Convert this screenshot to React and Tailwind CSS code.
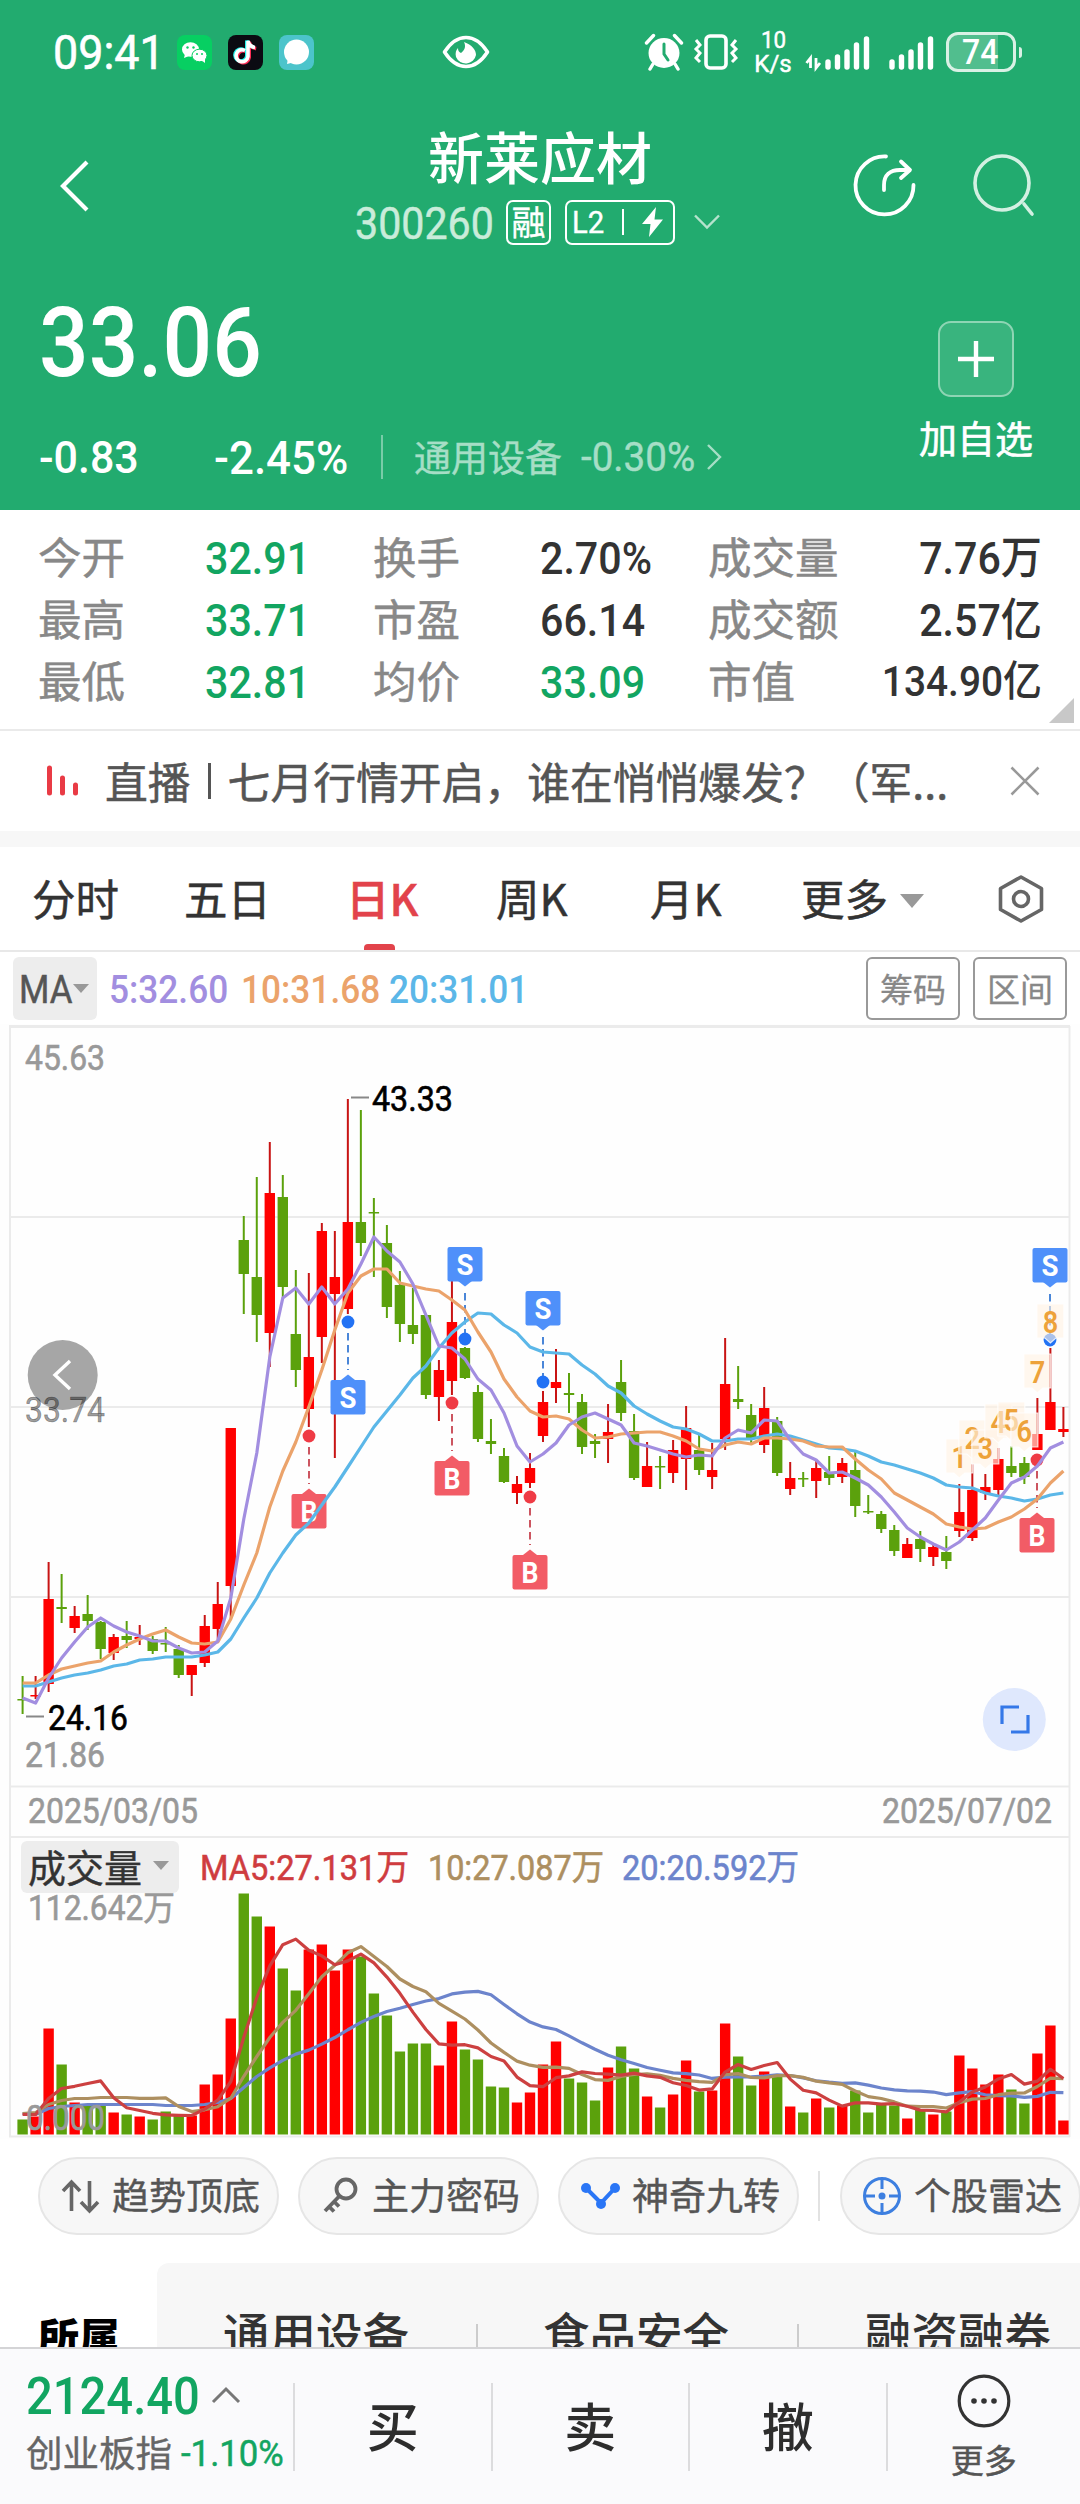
import clsx from 'clsx';

const NUM_FONT = "Roboto, 'Noto Sans CJK SC', sans-serif";
const STEP = 13.01;
const FIRST_X = 22.6;
const xAt = (i) => FIRST_X + STEP * i;

const UP = '#ff0000';
const DOWN = '#5ba10c';

// [direction, high, body top, body bottom, low, volume]
const CANDLES = [
  ['d', 652, 675, 676, 690, 15], ['u', 652, 671, 672, 675, 18], ['u', 538, 575, 660, 668, 106],
  ['d', 550, 583, 585, 599, 70], ['u', 582, 592, 604, 609, 32], ['d', 571, 590, 597, 606, 29],
  ['d', 597, 598, 625, 635, 31], ['u', 610, 613, 629, 636, 22], ['d', 597, 612, 616, 624, 20],
  ['u', 601, 613, 615, 621, 18], ['d', 612, 615, 627, 630, 15], ['d', 603, 619, 620, 628, 23],
  ['d', 621, 625, 651, 654, 20], ['u', 641, 641, 651, 672, 19], ['u', 591, 602, 639, 643, 50],
  ['u', 558, 580, 605, 616, 60], ['u', 404, 404, 562, 596, 116], ['d', 192, 216, 250, 290, 241],
  ['d', 153, 253, 291, 318, 218], ['u', 118, 169, 309, 343, 208], ['d', 151, 173, 263, 275, 166],
  ['d', 246, 310, 346, 363, 144], ['u', 249, 333, 385, 403, 185], ['u', 199, 207, 313, 339, 190],
  ['u', 207, 253, 270, 434, 164], ['u', 75, 198, 285, 290, 185], ['d', 86, 198, 219, 232, 178],
  ['d', 174, 188, 189, 253, 141], ['d', 201, 219, 283, 294, 119], ['d', 247, 261, 300, 318, 83],
  ['d', 264, 301, 310, 320, 91], ['d', 291, 291, 371, 375, 91], ['u', 336, 346, 373, 397, 69],
  ['u', 254, 298, 357, 371, 113], ['d', 323, 324, 354, 355, 85], ['d', 361, 368, 415, 418, 75],
  ['d', 395, 417, 420, 430, 48], ['d', 424, 432, 458, 459, 47], ['u', 452, 460, 469, 480, 32],
  ['u', 429, 444, 459, 464, 42], ['u', 367, 378, 412, 418, 70], ['u', 325, 358, 364, 379, 93],
  ['d', 349, 369, 371, 389, 56], ['d', 370, 378, 423, 430, 52], ['d', 410, 417, 420, 434, 34],
  ['u', 380, 408, 415, 439, 67], ['d', 336, 358, 389, 397, 88], ['d', 390, 407, 454, 456, 66],
  ['u', 418, 442, 463, 463, 38], ['d', 432, 442, 443, 465, 27], ['u', 416, 426, 449, 459, 40],
  ['u', 382, 404, 435, 466, 74], ['d', 411, 426, 446, 451, 43], ['u', 419, 446, 453, 465, 44],
  ['u', 314, 360, 415, 426, 111], ['d', 342, 375, 378, 385, 78], ['d', 380, 391, 415, 419, 49],
  ['u', 363, 384, 421, 429, 63], ['d', 393, 397, 449, 452, 59], ['u', 438, 454, 465, 471, 28],
  ['d', 448, 454, 455, 463, 22], ['u', 437, 444, 457, 474, 36], ['d', 432, 448, 454, 461, 27],
  ['u', 434, 439, 453, 459, 29], ['d', 428, 446, 482, 493, 44], ['d', 471, 487, 488, 490, 22],
  ['d', 487, 490, 505, 509, 30], ['d', 501, 506, 527, 532, 29], ['u', 514, 520, 534, 534, 16],
  ['d', 507, 515, 525, 538, 25], ['u', 521, 523, 533, 542, 20], ['d', 512, 528, 537, 545, 23],
  ['u', 460, 488, 507, 513, 79], ['u', 440, 466, 514, 517, 66], ['u', 450, 463, 469, 476, 50],
  ['u', 424, 435, 466, 471, 60], ['d', 422, 442, 449, 453, 45], ['d', 433, 439, 453, 460, 31],
  ['u', 374, 410, 426, 426, 81], ['u', 324, 378, 406, 406, 109], ['u', 383, 405, 408, 413, 14],
];

const MA5 = [
  674, 679, 654, 634, 618, 603, 594, 602, 608, 612, 617, 617, 624, 629, 628, 617, 574, 495, 429, 333,
  274, 264, 280, 263, 280, 265, 240, 213, 227, 238, 260, 291, 322, 324, 335, 355, 366, 389, 422, 438,
  430, 419, 401, 393, 389, 395, 401, 419, 422, 426, 430, 433, 431, 432, 414, 406, 409, 396, 397, 416,
  430, 436, 449, 448, 454, 461, 473, 488, 504, 513, 520, 526, 518, 506, 494, 476, 459, 453, 442, 424, 418,
];
const MA10 = [
  659, 659, 651, 645, 642, 639, 637, 628, 621, 615, 610, 606, 613, 619, 620, 618, 595, 561, 529, 483,
  447, 418, 383, 346, 306, 269, 252, 245, 245, 259, 262, 265, 267, 276, 286, 308, 328, 355, 373, 387,
  393, 392, 395, 406, 414, 413, 410, 409, 408, 408, 412, 417, 425, 427, 421, 418, 420, 414, 414, 415,
  417, 422, 423, 423, 435, 446, 455, 469, 476, 483, 490, 500, 503, 505, 504, 498, 493, 485, 475, 459, 447,
];
const MA20 = [
  662, 662, 658, 654, 651, 649, 646, 642, 640, 636, 635, 633, 633, 633, 631, 628, 615, 594, 574, 549,
  529, 511, 499, 481, 463, 443, 423, 403, 387, 371, 354, 342, 324, 309, 298, 289, 290, 301, 309, 323,
  328, 329, 330, 341, 350, 362, 369, 382, 390, 397, 403, 405, 410, 417, 417, 415, 415, 412, 410, 412,
  416, 420, 424, 425, 427, 432, 438, 441, 445, 449, 454, 461, 463, 464, 469, 472, 474, 477, 475, 471, 469,
];

const VOLUMES = CANDLES.map((c) => c[5]);

// the lead values cover the days whose window starts before the first bar
const movingAverage = (span, lead) =>
  VOLUMES.map((_, i) => {
    if (i < lead.length) return lead[i];
    const part = VOLUMES.slice(i - span + 1, i + 1);
    return part.reduce((a, b) => a + b, 0) / span;
  });

const VOL_MA5 = movingAverage(5, [20, 20, 36, 46]);
const VOL_MA10 = movingAverage(10, [21, 22, 30, 34, 36, 36, 37, 37, 37]);
const VOL_MA20 = movingAverage(20, [21, 20, 26, 28, 29, 30, 30, 30, 30, 30, 30, 29, 29, 29, 30, 32, 36, 47, 58]);

const toPoints = (ys) => ys.map((y, i) => `${xAt(i).toFixed(1)},${y}`).join(' ');

const MARKERS = [
  { type: 'S', x: 348, dot: 298, box: 356 },
  { type: 'S', x: 465, dot: 315, box: 223 },
  { type: 'S', x: 543, dot: 358, box: 267 },
  { type: 'S', x: 1050, dot: 316, box: 224 },
  { type: 'B', x: 309, dot: 412, box: 470 },
  { type: 'B', x: 452, dot: 379, box: 437 },
  { type: 'B', x: 530, dot: 473, box: 531 },
  { type: 'B', x: 1037, dot: 436, box: 494 },
];

const NINE_TURNS = [
  [1, 415], [2, 396], [3, 406], [4, 380], [5, 378], [6, 389], [7, 330], [8, 280],
];

const STATS = [
  ['今开', '32.91', true, '换手', '2.70%', false, '成交量', '7.76万'],
  ['最高', '33.71', true, '市盈', '66.14', false, '成交额', '2.57亿'],
  ['最低', '32.81', true, '均价', '33.09', true, '市值', '134.90亿'],
];

const Num = ({ className, right, wide, children }) => (
  <span
    className={clsx(
      "inline-block whitespace-nowrap pt-[0.07em] leading-none font-medium font-['Roboto','Noto_Sans_CJK_SC',sans-serif]",
      wide ? 'scale-x-[0.965]' : 'scale-x-[0.915]',
      right ? 'origin-right' : 'origin-left',
      className
    )}
  >
    {children}
  </span>
);

const Signal = ({ data }) => (
  <svg className={data ? 'w-[66px] h-[40px]' : 'w-[46px] h-[40px]'} viewBox={data ? '0 0 66 40' : '20 0 46 40'}>
    <g stroke="#fff" strokeWidth="5.4" strokeLinecap="round">
      <path d="M23 35v-5M32.500 35v-10M42 35v-15M51.500 35v-22M61.500 35V7" />
    </g>
    {data && <path d="M5.500 36V26l-4 5M11 26v10l4-5" fill="none" stroke="#fff" strokeWidth="2.800" />}
  </svg>
);

const StatusBar = () => (
  <div className="flex h-[104px] items-center pl-[53px] text-white">
    <Num className="w-[124px] !pt-0 text-[49px] !font-normal [-webkit-text-stroke:0.6px]">09:41</Num>
    <svg className="size-[35px]" viewBox="0 0 35 35">
      <rect width="35" height="35" rx="8" fill="#07cf62" />
      <ellipse cx="13.500" cy="14.500" rx="8.500" ry="7.300" fill="#fff" />
      <path d="M8 19l-1 4 5-2z" fill="#fff" />
      <ellipse cx="22.500" cy="20.500" rx="7.500" ry="6.300" fill="#fff" stroke="#07cf62" strokeWidth="1" />
      <path d="M24 25l4 3v-5z" fill="#fff" />
      <g fill="#07cf62">
        <circle cx="10.500" cy="12.500" r="1.200" /><circle cx="16.500" cy="12.500" r="1.200" />
        <circle cx="20" cy="19" r="1" /><circle cx="25" cy="19" r="1" />
      </g>
    </svg>
    <svg className="ml-4 size-[35px]" viewBox="0 0 35 35">
      <rect width="35" height="35" rx="8" fill="#0b0b12" />
      <g fill="none" strokeWidth="3.600">
        <path d="M17 15.500a6 6 0 1 0 3 6V6c1 4 3 6 7 6.500" stroke="#fe2c55" transform="translate(1.200 1)" />
        <path d="M17 15.500a6 6 0 1 0 3 6V6c1 4 3 6 7 6.500" stroke="#25f4ee" transform="translate(-1.200 -.6)" />
        <path d="M17 15.500a6 6 0 1 0 3 6V6c1 4 3 6 7 6.500" stroke="#fff" />
      </g>
    </svg>
    <svg className="ml-4 size-[35px]" viewBox="0 0 35 35">
      <rect width="35" height="35" rx="8" fill="#4cc4cb" />
      <circle cx="17.500" cy="17" r="12.500" fill="#fff" />
      <path d="M9 23l-1 6 8-2z" fill="#fff" />
    </svg>
    <svg className="ml-[128px] h-[34px] w-[48px]" viewBox="0 0 48 34">
      <path d="M2.500 17C9 7 16 2.500 24 2.500S39 7 45.500 17C39 27 32 31.500 24 31.500S9 27 2.500 17z" fill="none" stroke="#fff" strokeWidth="3.600" strokeLinejoin="round" />
      <path d="M22 7c8 3 12 8 12 13a10.500 10.500 0 0 1-20 2c-1-4 0-7 2-9 0 3 1 4 3 5 4-3 5-7 3-11z" fill="#fff" />
    </svg>
    <svg className="ml-[154px] h-[38px] w-[40px]" viewBox="0 0 40 38">
      <ellipse cx="20" cy="20" rx="15.500" ry="15" fill="#fff" />
      <path d="M2.500 10l7-7.500M37.500 10l-7-7.500M9 31l-3 5M31 31l3 5" stroke="#fff" strokeWidth="3.400" strokeLinecap="round" />
      <path d="M20 11v10l4 6" fill="none" stroke="#22ab6f" strokeWidth="3" strokeLinecap="round" />
    </svg>
    <svg className="ml-[9px] h-[36px] w-[46px]" viewBox="0 0 46 36">
      <rect x="13" y="2" width="20" height="32" rx="4" fill="none" stroke="#fff" strokeWidth="3.600" />
      <path d="M3 6l4 5-4 4 4 4-4 5 4 4M43 6l-4 5 4 4-4 4 4 5-4 4" fill="none" stroke="#fff" strokeWidth="3" />
    </svg>
    <div className="ml-[16px] flex w-[36px] flex-col items-center font-[Roboto] text-[24px] leading-[24px] [-webkit-text-stroke:0.5px]">
      <span className="scale-x-[0.93]">10</span>
      <span>K/s</span>
    </div>
    <div className="ml-[14px]"><Signal data /></div>
    <div className="ml-[18px]"><Signal /></div>
    <div className="ml-[11px] flex h-[40px] w-[70px] items-center rounded-[12px] border-[3.500px] border-[#d9f1e5] bg-[linear-gradient(90deg,#51be8e_77%,#22ab6f_77%)]">
      <Num className="ml-[13px] !pt-0 text-[35px]">74</Num>
    </div>
    <div className="ml-[3px] h-[11px] w-[3px] rounded-r bg-[#d9f1e5]" />
  </div>
);

const TitleBar = () => (
  <div className="flex h-[152px] items-start text-white">
    <svg className="ml-[58px] mt-[54px] h-[56px] w-[34px]" viewBox="0 0 34 56">
      <path d="M29 4L5 28l24 24" fill="none" stroke="#fff" strokeWidth="4.200" />
    </svg>
    <div className="ml-[263px] flex w-[371px] flex-col">
      <div className="ml-[73px] flex h-[60px] mt-[21px] items-center text-[56px] font-medium leading-none">新莱应材</div>
      <div className="flex h-[46px] mt-[14px] items-center">
        <Num className="w-[151px] !pt-[3px] text-[45px] !font-normal text-[#c9ecda] [-webkit-text-stroke:0.5px]">300260</Num>
        <div className="flex size-[45px] shrink-0 items-center justify-center rounded-[7px] border-[2.500px] border-white pb-[2px] text-[34px] leading-none [-webkit-text-stroke:0.4px]">融</div>
        <div className="ml-[14px] flex h-[45px] w-[110px] items-center rounded-[7px] border-[2.500px] border-white">
          <Num className="ml-[5px] w-[50px] !pt-0 text-[32px] !font-normal [-webkit-text-stroke:0.4px]">L2</Num>
          <div className="h-[26px] w-[2px] bg-white" />
          <svg className="ml-[18px] h-[30px] w-[22px]" viewBox="0 0 22 30">
            <path d="M14 0L0 17h8.500L7 30 21 12.500h-8.500z" fill="#fff" />
          </svg>
        </div>
        <svg className="ml-[18px] h-[18px] w-[28px]" viewBox="0 0 28 18">
          <path d="M2 2.500l12 12 12-12" fill="none" stroke="#b5e3cd" strokeWidth="2.400" />
        </svg>
      </div>
    </div>
    <svg className="ml-[125px] mt-[47px] size-[68px]" viewBox="0 0 68 68" fill="none" stroke="#fff" strokeWidth="3.800" strokeLinecap="round">
      <path d="M35 5.500A29 29 0 1 0 62.500 34" />
      <path d="M33 39V34C33 24 39 19 49 19h9M50 10.500l9 8.500-9 8" strokeLinejoin="round" />
    </svg>
    <svg className="ml-[52px] mt-[48px] size-[66px]" viewBox="0 0 66 66" fill="none" stroke="#d3f0e2" strokeWidth="3.600" strokeLinecap="round">
      <circle cx="31" cy="31" r="27" />
      <path d="M53 52l8 10" />
    </svg>
  </div>
);

const PriceBlock = () => (
  <div className="flex h-[254px] justify-between pl-[39px] pr-[47px] text-white">
    <div className="flex flex-col">
      <Num className="mt-[37px] !pt-0 text-[95.500px] !leading-[100px]">33.06</Num>
      <div className="mt-[39px] flex h-[50px] items-center">
        <Num wide className="w-[175px] text-[44.500px]">-0.83</Num>
        <Num wide className="w-[167px] text-[45.500px]">-2.45%</Num>
        <div className="h-[44px] w-[2px] bg-[#79cca8]" />
        <span className="ml-[31px] w-[167px] pb-[2px] text-[37px] leading-none text-[#a6dec6] [-webkit-text-stroke:0.4px]">通用设备</span>
        <Num wide className="w-[124px] text-[40px] !font-normal text-[#a6dec6] [-webkit-text-stroke:0.4px]">-0.30%</Num>
        <svg className="h-[30px] w-[18px]" viewBox="0 0 18 30">
          <path d="M3 3l12 12L3 27" fill="none" stroke="#a6dec6" strokeWidth="2.400" />
        </svg>
      </div>
    </div>
    <div className="flex w-[114px] flex-col items-center pt-[65px]">
      <div className="flex size-[76px] items-center justify-center rounded-[13px] border-2 border-[#8ed5b4] bg-[#39b47e]">
        <svg className="size-[40px]" viewBox="0 0 40 40">
          <path d="M20 2v36M2 20h36" stroke="#fff" strokeWidth="4.400" />
        </svg>
      </div>
      <div className="mt-[21px] whitespace-nowrap text-[38px] leading-none [-webkit-text-stroke:0.6px]">加自选</div>
    </div>
  </div>
);

const Stats = () => (
  <div className="flex h-[219px] justify-between">
    <div className="flex flex-col pl-[38px] pt-[16px] text-[43.500px] leading-none text-[#888]">
      {STATS.map(([a, av, aGreen, b, bv, bGreen, c, cv]) => (
        <div key={a} className="flex h-[62px] items-center">
          <span className="w-[167px] pb-[2px] [-webkit-text-stroke:0.5px]">{a}</span>
          <Num className={clsx('w-[168px] text-[45px]', aGreen ? 'text-[#12a561]' : 'text-[#333]')}>{av}</Num>
          <span className="w-[167px] pb-[2px] [-webkit-text-stroke:0.5px]">{b}</span>
          <Num className={clsx('w-[168px] text-[45px]', bGreen ? 'text-[#12a561]' : 'text-[#333]')}>{bv}</Num>
          <span className="w-[134px] pb-[2px] [-webkit-text-stroke:0.5px]">{c}</span>
          <Num right className={clsx('w-[200px] text-right text-[#333]', cv.length > 6 ? 'text-[42.500px]' : 'text-[45px]')}>{cv}</Num>
        </div>
      ))}
    </div>
    <svg className="mr-[6px] mt-[188px] size-[25px]" viewBox="0 0 25 25">
      <path d="M25 0v25H0z" fill="#c8c8c8" />
    </svg>
  </div>
);

const News = () => (
  <div className="flex h-[102px] items-center border-t-2 border-[#eaeaea] pl-[45px]">
    <svg className="h-[32px] w-[36px]" viewBox="0 0 36 32">
      <path d="M4.500 3v25M17.500 13v15M30.500 20v8" stroke="#e93b45" strokeWidth="5" strokeLinecap="round" />
    </svg>
    <div className="ml-[24px] w-[905px] whitespace-nowrap pb-[2px] text-[42.800px] leading-none text-[#555] [-webkit-text-stroke:0.5px]">
      直播<span className="mx-[17px] inline-block h-[36px] w-[3px] bg-[#555]" />七月行情开启，谁在悄悄爆发？（军...
    </div>
    <svg className="size-[30px]" viewBox="0 0 30 30">
      <path d="M1.500 1.500l27 27M28.500 1.500l-27 27" stroke="#999" strokeWidth="2.600" />
    </svg>
  </div>
);

const Tabs = () => (
  <div className="flex h-[105px] items-center border-b-2 border-[#e8e8e8] pl-[32px] text-[43.500px] leading-none text-[#333] [-webkit-text-stroke:0.5px]">
    <span className="w-[152px] pb-[2px]">分时</span>
    <span className="w-[162px] pb-[2px]">五日</span>
    <span className="relative flex h-full w-[150px] items-center pb-[2px] font-medium text-[#e2434b]">
      日K
      <span className="absolute bottom-0 left-[18px] h-[6px] w-[31px] rounded-t-[4px] bg-[#e2434b]" />
    </span>
    <span className="w-[154px] pb-[2px]">周K</span>
    <span className="w-[151px] pb-[2px]">月K</span>
    <span className="w-[99px] pb-[2px]">更多</span>
    <svg className="mt-1 h-[14px] w-[24px]" viewBox="0 0 24 14">
      <path d="M0 0h24L12 14z" fill="#999" />
    </svg>
    <svg className="ml-[72px] size-[50px]" viewBox="0 0 50 50" fill="none" stroke="#666" strokeWidth="3.600">
      <path d="M25 3l20.500 11.500v21L25 47 4.500 35.500v-21z" strokeLinejoin="round" />
      <circle cx="25" cy="25" r="7.500" />
    </svg>
  </div>
);

const MaBar = () => (
  <div className="flex h-[72px] items-center pl-[13px] pr-[13px] pt-px">
    <div className="flex h-[63px] w-[84px] items-center rounded-[6px] bg-[#ededed] pl-[6px]">
      <Num className="w-[54px] text-[38px] !font-normal text-[#555] [-webkit-text-stroke:0.5px]">MA</Num>
      <svg className="h-[9px] w-[16px]" viewBox="0 0 16 9">
        <path d="M0 0h16L8 9z" fill="#999" />
      </svg>
    </div>
    <Num className="ml-[12px] w-[132px] text-[38.500px] text-[#a28ee0]">5:32.60</Num>
    <Num className="w-[148px] text-[38.500px] text-[#eba36b]">10:31.68</Num>
    <Num className="w-[150px] text-[38.500px] text-[#5bb7e8]">20:31.01</Num>
    <div className="ml-auto flex gap-[13px] text-[33px] leading-none text-[#888] [-webkit-text-stroke:0.3px]">
      <div className="flex h-[63px] w-[94px] items-center justify-center rounded-[6px] border-2 border-[#999]">筹码</div>
      <div className="flex h-[63px] w-[94px] items-center justify-center rounded-[6px] border-2 border-[#999]">区间</div>
    </div>
  </div>
);

const Marker = ({ type, x, dot, box }) => {
  const above = box < dot;
  const fill = type === 'S' ? '#4f90fa' : '#f25c66';
  const line = type === 'S' ? '#4a86d8' : '#cc5560';
  const tip = above
    ? `M${x - 7} ${box + 34}l7 5.500 7-5.500z`
    : `M${x - 7} ${box}l7-5.500 7 5.500z`;

  return (
    <g>
      <path
        d={above ? `M${x} ${box + 46}V${dot - 6}` : `M${x} ${dot + 11}V${box - 10}`}
        stroke={line} strokeWidth="2" strokeDasharray="7.500 4.500"
      />
      <circle cx={x} cy={dot} r="6.400" fill={type === 'S' ? '#2272f4' : '#ef3b45'} />
      <path d={tip} fill={fill} />
      <rect x={x - 17.5} y={box} width="35" height="34.500" rx="2" fill={fill} />
      <text x={x} y={box + 28} textAnchor="middle" fontSize="30" fontWeight="700" fill="#fff"
        fontFamily={NUM_FONT} textLength="17" lengthAdjust="spacingAndGlyphs">{type}</text>
    </g>
  );
};

const ChartLabel = ({ x, y, width, size = 34.5, fill = '#999', children }) => (
  <text x={x} y={y} fontSize={size} fill={fill} fontFamily={NUM_FONT} stroke={fill} strokeWidth="0.6"
    textLength={width} lengthAdjust="spacingAndGlyphs">{children}</text>
);

const Line = ({ ys, color }) => (
  <polyline points={toPoints(ys)} fill="none" stroke={color} strokeWidth="3.200" strokeLinejoin="round" />
);

const CandleChart = () => (
  <svg className="block h-[812px] w-[1080px] bg-[#fefefe]" viewBox="0 0 1080 812">
    <g stroke="#ebebeb" strokeWidth="2">
      <path d="M9 2.500h1061" strokeWidth="3" />
      <path d="M9 193h1061M9 383h1061M9 573h1061M9 762.500h1061" />
      <path d="M10 2v810M1069.500 2v810" />
    </g>
    <ChartLabel x={25} y={46} width={80}>45.63</ChartLabel>
    <ChartLabel x={25} y={743} width={80}>21.86</ChartLabel>

    {MARKERS.filter((m) => m.type === 'B').map((m) => <Marker key={m.x} {...m} />)}

    {CANDLES.map(([dir, high, top, bottom, low], i) => {
      const color = dir === 'u' ? UP : DOWN;
      return (
        <g key={i}>
          <path d={`M${xAt(i)} ${high}V${low}`} stroke={dir === 'u' ? '#c81414' : DOWN} strokeWidth="2" />
          <rect x={xAt(i) - 5.2} y={top} width="10.400" height={Math.max(bottom - top, 1.5)} fill={color} />
        </g>
      );
    })}

    {MARKERS.filter((m) => m.type === 'S').map((m) => <Marker key={m.x} {...m} />)}

    {/* each flag is see-through and partly covers the digit before it */}
    {NINE_TURNS.map(([n, top]) => {
      const x = xAt(71 + n);
      return (
        <g key={n}>
          <path d={`M${x - 13.5} ${top}h27v34h-8l-5.500 5-5.500-5h-8z`} fill="#fff2e4" fillOpacity=".62" stroke="#fff" strokeOpacity=".8" strokeWidth="1.200" />
          <text x={x} y={top + 29} textAnchor="middle" fontSize="31.500" fontWeight="600" fill="#eda23a"
            fontFamily={NUM_FONT} textLength="15.500" lengthAdjust="spacingAndGlyphs">{n}</text>
        </g>
      );
    })}

    <Line ys={MA20} color="#5bb7e8" />
    <Line ys={MA10} color="#eba36b" />
    <Line ys={MA5} color="#a28ee0" />

    <path d="M351 73.500h18M26 692.500h18" stroke="#888" strokeWidth="2" />
    <ChartLabel x={372} y={87} width={81} fill="#000">43.33</ChartLabel>
    <ChartLabel x={48} y={706} width={80} fill="#000">24.16</ChartLabel>

    <circle cx="62.700" cy="351" r="35" fill="#a6a6a6" />
    <path d="M70 337l-15 14 15 14" fill="none" stroke="#fff" strokeWidth="3.400" />
    <ChartLabel x={25} y={398} width={80} fill="#00000066">33.74</ChartLabel>

    <circle cx="1014.300" cy="695.500" r="31.500" fill="#dfe8fd" />
    <path d="M1019 683h-17v17M1028 691v17h-17" fill="none" stroke="#3578e8" strokeWidth="3.200" />

    <ChartLabel x={28} y={799} width={170} size={35}>2025/03/05</ChartLabel>
    <ChartLabel x={882} y={799} width={170} size={35}>2025/07/02</ChartLabel>
  </svg>
);

const VolumeChart = () => (
  <div className="relative h-[303px] w-[1080px] bg-[#fefefe]">
    <svg className="block h-[303px] w-[1080px]" viewBox="0 0 1080 303">
      <path d="M9 1h1061M10 0v301M1069.500 0v301M9 300.500h1061" stroke="#ebebeb" strokeWidth="2" fill="none" />
      {CANDLES.map(([dir, , , , , vol], i) => (
        <rect key={i} x={xAt(i) - 5.2} y={298.5 - vol} width="10.400" height={vol} fill={dir === 'u' ? UP : DOWN} />
      ))}
      <Line ys={VOL_MA20.map((v) => 298.5 - v)} color="#6c84cc" />
      <Line ys={VOL_MA10.map((v) => 298.5 - v)} color="#ad8f60" />
      <Line ys={VOL_MA5.map((v) => 298.5 - v)} color="#cc4040" />
      <ChartLabel x={28} y={84} width={147}>112.642万</ChartLabel>
      <ChartLabel x={26} y={294} width={79}>0.000</ChartLabel>
      <ChartLabel x={200} y={44} width={209} size={35} fill="#cf3c3f">MA5:27.131万</ChartLabel>
      <ChartLabel x={428} y={44} width={176} size={35} fill="#ad8f60">10:27.087万</ChartLabel>
      <ChartLabel x={622} y={44} width={177} size={35} fill="#6c84cc">20:20.592万</ChartLabel>
    </svg>
    <div className="absolute left-[21px] top-[5px] flex h-[52px] w-[158px] items-center rounded-[6px] bg-[#ededed] pb-[3px] pl-[7px] text-[38px] leading-none text-[#333] [-webkit-text-stroke:0.4px]">
      成交量
      <svg className="ml-[11px] h-[9px] w-[16px]" viewBox="0 0 16 9">
        <path d="M0 0h16L8 9z" fill="#999" />
      </svg>
    </div>
  </div>
);

const Pill = ({ icon, label }) => (
  <div className="flex h-[78px] w-[241px] shrink-0 items-center rounded-full border-2 border-[#e6e6e6] bg-[#f7f7f7] pl-[19px]">
    <svg className="size-[44px]" viewBox="0 0 44 44" fill="none">{icon}</svg>
    <span className="ml-[9px] whitespace-nowrap pb-[3px] text-[37px] leading-none text-[#555] [-webkit-text-stroke:0.4px]">{label}</span>
  </div>
);

const Pills = () => (
  <div className="flex h-[124px] items-start gap-[19px] overflow-hidden pl-[38px] pt-[18px]">
    <Pill
      label="趋势顶底"
      icon={<path d="M12.500 37V8M4 17l8.500-9 8.500 9M30.500 7v29M22 28l8.500 9 8.500-9" stroke="#666" strokeWidth="3.600" />}
    />
    <Pill
      label="主力密码"
      icon={
        <g stroke="#666" strokeWidth="3.800">
          <circle cx="27" cy="15" r="9.500" />
          <path d="M20.500 22L6 37M10 32.500l5 5M15 27.500l5 5" />
        </g>
      }
    />
    <Pill
      label="神奇九转"
      icon={
        <g fill="#2a76f6">
          <path d="M7 14l15 15 14-15" fill="none" stroke="#2a76f6" strokeWidth="4" />
          <circle cx="7" cy="14" r="5" /><circle cx="36" cy="14" r="5" /><circle cx="22" cy="30" r="5" />
        </g>
      }
    />
    <div className="mr-px mt-[14px] h-[50px] w-[2px] shrink-0 bg-[#e2e2e2]" />
    <Pill
      label="个股雷达"
      icon={
        <g stroke="#3d7fe0" strokeWidth="3">
          <circle cx="21" cy="22" r="17.500" />
          <path d="M21 4v11M21 29v11M3 22h11M28 22h11" />
          <circle cx="21" cy="22" r="3.500" fill="#3d7fe0" stroke="none" />
        </g>
      }
    />
  </div>
);

const Sectors = () => (
  <div className="flex h-[84px] overflow-hidden">
    <div className="w-[157px] shrink-0 pl-[38px] pt-[52px] text-[41px] font-black leading-none text-black">所属</div>
    <div className="flex flex-1 items-start rounded-tl-[12px] bg-[#f7f7f7] pt-[46px] text-[46.500px] font-medium leading-none text-[#333]">
      <span className="w-[319px] shrink-0 pl-[66px]">通用设备</span>
      <div className="mt-[15px] h-[40px] w-[2px] shrink-0 bg-[#ccc]" />
      <span className="w-[319px] shrink-0 pl-[65px]">食品安全</span>
      <div className="mt-[15px] h-[40px] w-[2px] shrink-0 bg-[#ccc]" />
      <span className="shrink-0 whitespace-nowrap pl-[66px]">融资融券</span>
    </div>
  </div>
);

const BottomBar = () => (
  <div className="flex h-[157px] border-t-2 border-[#d4d4d6] bg-[#fafafc]">
    <div className="flex w-[293px] flex-col pl-[26px] pt-[20px]">
      <div className="flex h-[52px] items-center">
        <Num className="w-[185px] text-[51.500px] text-[#12a561]">2124.40</Num>
        <svg className="h-[18px] w-[30px]" viewBox="0 0 30 18">
          <path d="M2 16L15 3l13 13" fill="none" stroke="#777" strokeWidth="3" />
        </svg>
      </div>
      <div className="mt-[10px] flex h-[44px] items-center text-[36.500px] leading-none text-[#666]">
        <span className="w-[155px] shrink-0 pb-[2px] [-webkit-text-stroke:0.4px]">创业板指</span>
        <Num wide className="text-[36px] !font-normal text-[#12a561] [-webkit-text-stroke:0.5px]">-1.10%</Num>
      </div>
    </div>
    {['买', '卖', '撤'].map((label) => (
      <div key={label} className="flex w-[197.500px] items-start">
        <div className="mt-[34px] h-[88px] w-[2px] bg-[#dcdcde]" />
        <div className="mt-[50px] flex-1 text-center text-[52px] font-medium leading-none text-[#2d2d2d]">{label}</div>
      </div>
    ))}
    <div className="mt-[34px] h-[88px] w-[2px] bg-[#dcdcde]" />
    <div className="flex flex-1 flex-col items-center pt-[25px]">
      <svg className="size-[54px]" viewBox="0 0 54 54">
        <circle cx="27" cy="27" r="24.800" fill="none" stroke="#333" strokeWidth="3.200" />
        <circle cx="17" cy="27" r="2.800" fill="#333" />
        <circle cx="27" cy="27" r="2.800" fill="#333" />
        <circle cx="37" cy="27" r="2.800" fill="#333" />
      </svg>
      <span className="mt-[15px] text-[33px] leading-none text-[#555] [-webkit-text-stroke:0.4px]">更多</span>
    </div>
  </div>
);

export default function App() {
  return (
    <div className="flex h-[2504px] w-[1080px] flex-col overflow-hidden bg-white font-['Noto_Sans_CJK_SC',sans-serif]">
      <div className="h-[510px] bg-[#22ab6f]">
        <StatusBar />
        <TitleBar />
        <PriceBlock />
      </div>
      <Stats />
      <News />
      <div className="h-[16px] bg-[#f7f7f7]" />
      <Tabs />
      <MaBar />
      <CandleChart />
      <VolumeChart />
      <Pills />
      <Sectors />
      <BottomBar />
    </div>
  );
}
